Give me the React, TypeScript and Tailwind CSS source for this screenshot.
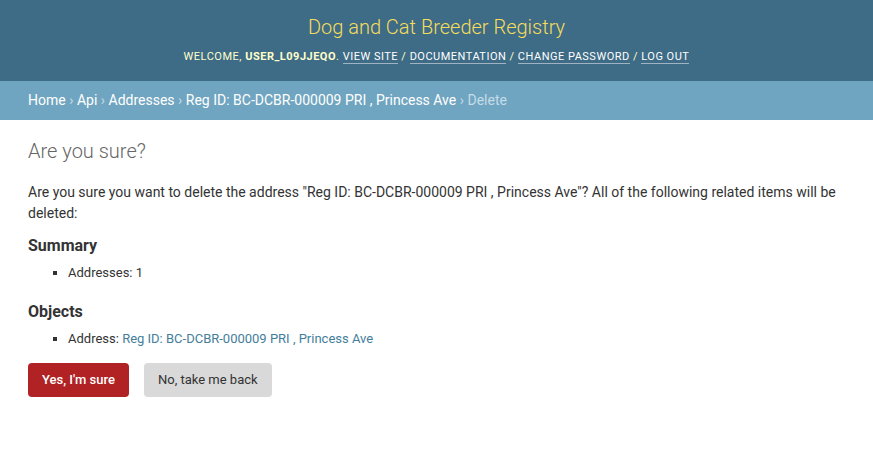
export default function App() {
  return (
    <div className="min-h-[468px] bg-white text-[#333] text-[14px]" style={{ fontFamily: 'Roboto, "Liberation Sans", sans-serif' }}>
      <div className="bg-[#3e6b86] h-[81px] flex flex-col items-center pt-[13px]">
        <h1 className="text-[#f5dd5d] text-[20px] font-light leading-[28px]">Dog and Cat Breeder Registry</h1>
        <div className="mt-[8px] text-[11px] uppercase tracking-[0.5px] text-[#ffc] leading-[16px]">
          WELCOME, <strong className="font-bold">USER_L09JJEQO</strong>.{" "}
          <a className="text-white border-b border-[#9fb3c2]">View site</a> /{" "}
          <a className="text-white border-b border-[#9fb3c2]">Documentation</a> /{" "}
          <a className="text-white border-b border-[#9fb3c2]">Change password</a> /{" "}
          <a className="text-white border-b border-[#9fb3c2]">Log out</a>
        </div>
      </div>
      <div className="bg-[#6fa5c0] h-[39px] px-[28px] flex items-center text-[14px] text-[#c4dce8]">
        <a className="text-white">Home</a>
        <span className="mx-[3.5px]">›</span>
        <a className="text-white">Api</a>
        <span className="mx-[3.5px]">›</span>
        <a className="text-white">Addresses</a>
        <span className="mx-[3.5px]">›</span>
        <a className="text-white">Reg ID: BC-DCBR-000009 PRI , Princess Ave</a>
        <span className="mx-[3.5px]">›</span>
        <span>Delete</span>
      </div>
      <div className="px-[28px] pt-[18px]">
        <h1 className="text-[20px] font-light text-[#666] leading-[26px] mb-[18px]">Are you sure?</h1>
        <p className="text-[14px] leading-[21px] text-[#333]">
          Are you sure you want to delete the address "Reg ID: BC-DCBR-000009 PRI , Princess Ave"? All of the following related items will be deleted:
        </p>
        <h2 className="text-[16px] font-bold text-[#333] mt-[12px] mb-[7px] leading-[20px]">Summary</h2>
        <ul className="list-[square] ml-[40px] text-[13px] leading-[20px]">
          <li>Addresses: 1</li>
        </ul>
        <h2 className="text-[16px] font-bold text-[#333] mt-[19px] mb-[7px] leading-[20px]">Objects</h2>
        <ul className="list-[square] ml-[40px] text-[13px] leading-[20px]">
          <li>
            Address: <a className="text-[#447e9b]">Reg ID: BC-DCBR-000009 PRI , Princess Ave</a>
          </li>
        </ul>
        <div className="flex gap-[15px] mt-[14px]">
          <button className="bg-[#b02224] text-white text-[13px] font-medium h-[34px] px-[14px] rounded-[4px]">Yes, I'm sure</button>
          <button className="bg-[#d9d9d9] text-[#333] text-[13px] h-[34px] px-[14px] rounded-[4px]">No, take me back</button>
        </div>
      </div>
    </div>
  );
}
